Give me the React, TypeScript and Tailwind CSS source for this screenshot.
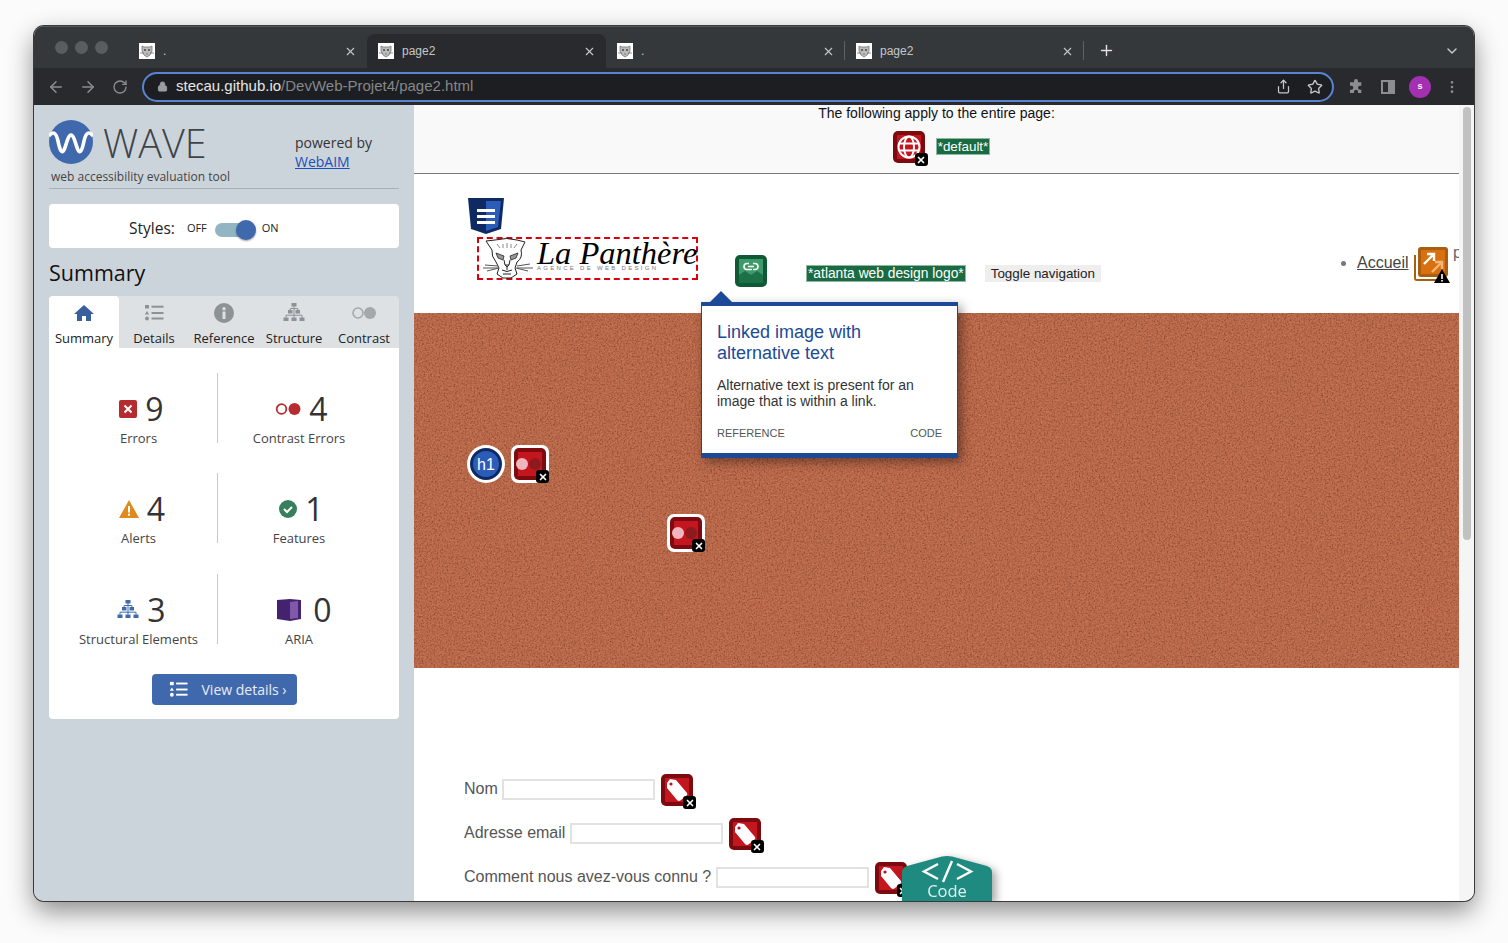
import React from 'react';
import { ArrowLeft, ArrowRight, ChevronDown, EllipsisVertical, Lock, Plus, RotateCw, Share, Star, X } from 'lucide-react';

// favicon of the site, small panther head on white
function Favicon() {
    return (
        <svg width="16" height="16" viewBox="0 0 16 16" className="shrink-0 bg-white">
            <path d="M3 3l2 1h6l2-1v5l-2 4-3 2-3-2-2-4z" fill="#bbb" stroke="#777" strokeWidth="0.8" />
            <circle cx="6" cy="7" r="1" fill="#444" />
            <circle cx="10" cy="7" r="1" fill="#444" />
            <path d="M1 10h4M11 10h4M7 11h2" stroke="#666" strokeWidth="0.7" />
        </svg>
    );
}

function Tab({ title, active, divider }: { title: string; active?: boolean; divider?: boolean }) {
    return (
        <div className={`relative flex h-[34px] w-[239px] shrink-0 items-center rounded-t-lg pl-[11px] pr-[10px] ${active ? 'bg-[#292a2d]' : ''}`}>
            <Favicon />
            <span className="ml-[8px] flex-1 text-[12px] text-[#c4c7c9]">{title}</span>
            <X size={13} strokeWidth={2} className="text-[#c4c7c9]" />
            {divider && <div className="absolute right-0 top-[7px] h-[19px] w-px bg-[#5f6164]" />}
        </div>
    );
}

function TreeIcon({ color, size = 22 }: { color: string; size?: number }) {
    return (
        <svg width={size} height={size} viewBox="0 0 22 22" fill={color}>
            <rect x="8.500" y="1" width="5" height="3.500" />
            <rect x="5" y="8" width="4.500" height="3.500" />
            <rect x="12.500" y="8" width="4.500" height="3.500" />
            <rect x="0.500" y="15.500" width="5" height="3.500" />
            <rect x="8.500" y="15.500" width="5" height="3.500" />
            <rect x="16.500" y="15.500" width="5" height="3.500" />
            <path d="M11 4v11.500M7.200 6.500h7.600v1.500M7.200 6.500V8M3 15.500V13.200h16v2.300" fill="none" stroke={color} strokeWidth="1" />
        </svg>
    );
}

function ListIcon({ color, size = 20 }: { color: string; size?: number }) {
    return (
        <svg width={size} height={size} viewBox="0 0 20 20" fill={color}>
            <rect x="1" y="2" width="4" height="3.500" />
            <path d="M3 8l2.200 3.400H.8z" />
            <circle cx="3" cy="15.500" r="2" />
            <rect x="7.500" y="2.700" width="12" height="2" />
            <rect x="7.500" y="9" width="12" height="2" />
            <rect x="7.500" y="14.500" width="12" height="2" />
        </svg>
    );
}

function SideTab({ label, active, children }: { label: string; active?: boolean; children: React.ReactNode }) {
    return (
        <div className={`flex w-[70px] flex-col items-center pt-[5px] ${active ? 'rounded-t bg-white' : ''}`}>
            <div className="flex h-[24px] items-center justify-center">{children}</div>
            <span className="mt-[4px] whitespace-nowrap text-[13px] leading-[18px] text-[#222]">{label}</span>
        </div>
    );
}

function Stat({ icon, value, label, gap = 8, shift = 6 }: { icon: React.ReactNode; value: string; label: string; gap?: number; shift?: number }) {
    return (
        <div className="flex flex-col items-center pt-[17px]">
            <div className="flex h-[38px] items-center" style={{ gap, marginLeft: shift }}>
                {icon}
                <span className="text-[32px] font-normal leading-[38px] text-[#333]">{value}</span>
            </div>
            <span className="mt-[1px] whitespace-nowrap text-[13px] leading-[18px] text-[#444]">{label}</span>
        </div>
    );
}

function Sidebar() {
    return (
        <aside className="flex w-[380px] shrink-0 flex-col bg-[#ccd4db] px-[15px] pt-[15px] font-['Open_Sans',sans-serif]">
            <div className="flex h-[69px] border-b border-[#a8b0b7]">
                <div className="w-[246px]">
                    <div className="flex items-center">
                        <svg width="44" height="44" viewBox="0 0 44 44">
                            <circle cx="22" cy="22" r="22" fill="#4069ad" />
                            <path d="M0 16c4-5 7-4 9 5 2 10 4 13 6 9s4-15 7-15 5 11 7 15 4 1 6-9c2-9 5-10 9-5" fill="none" stroke="#fff" strokeWidth="3.600" />
                        </svg>
                        <span className="relative top-[1px] ml-[10px] text-[39.500px] font-light leading-[44px] text-[#3f4448]">WAVE</span>
                    </div>
                    <div className="ml-[2px] mt-[4px] whitespace-nowrap text-[12px] leading-[18px] text-[#444]">web accessibility evaluation tool</div>
                </div>
                <div className="pt-[13px] text-[14px] leading-[19px] text-[#333]">
                    <div>powered by</div>
                    <a className="text-[#1c4fb8] underline">WebAIM</a>
                </div>
            </div>

            <div className="mt-[15px] flex h-[44px] items-center rounded bg-white pl-[80px] pt-[5px]">
                <span className="relative top-[-1px] text-[15.500px] leading-[20px] text-[#222]">Styles:</span>
                <span className="ml-[12px] text-[11px] text-[#222]">OFF</span>
                <div className="relative top-[1px] ml-[8px] h-[14px] w-[34px] rounded-full bg-[#92b5c4]">
                    <div className="absolute right-[-7px] top-[-3px] h-[20px] w-[20px] rounded-full bg-[#4069ad] shadow-[0_1px_2px_rgba(0,0,0,0.4)]" />
                </div>
                <span className="ml-[13px] text-[11px] text-[#222]">ON</span>
            </div>

            <h2 className="mt-[10px] text-[21.500px] font-normal leading-[30px] text-[#111]">Summary</h2>

            <div className="mt-[8px] flex h-[52px] rounded-t bg-[#dde1e4]">
                <SideTab label="Summary" active>
                    <svg width="20" height="18" viewBox="0 0 20 18" fill="#3a5f9e"><path d="M10 1L0 10h3v7h5v-5h4v5h5v-7h3z" /></svg>
                </SideTab>
                <SideTab label="Details"><ListIcon color="#8d9296" /></SideTab>
                <SideTab label="Reference">
                    <svg width="20" height="20" viewBox="0 0 20 20">
                        <circle cx="10" cy="10" r="10" fill="#8d9296" />
                        <rect x="8.500" y="8.500" width="3" height="7.500" fill="#dde1e4" />
                        <circle cx="10" cy="5.700" r="1.700" fill="#dde1e4" />
                    </svg>
                </SideTab>
                <SideTab label="Structure"><TreeIcon color="#8d9296" /></SideTab>
                <SideTab label="Contrast">
                    <svg width="26" height="14" viewBox="0 0 26 14">
                        <circle cx="7" cy="7" r="5" fill="none" stroke="#a4a8ab" strokeWidth="1.600" />
                        <circle cx="19" cy="7" r="6" fill="#a4a8ab" />
                    </svg>
                </SideTab>
            </div>

            <div className="h-[371px] rounded-b bg-white pt-[25px]">
                <div className="grid grid-cols-[169px_181px] gap-y-[30px]">
                    <div className="h-[70px] border-r border-[#c8c8c8] pl-[11px]">
                        <Stat label="Errors" value="9" icon={
                            <svg width="18" height="18" viewBox="0 0 18 18"><rect width="18" height="18" rx="2" fill="#b52b30" /><path d="M5.500 5.500l7 7M12.500 5.500l-7 7" stroke="#fff" strokeWidth="2" /></svg>
                        } />
                    </div>
                    <div className="h-[70px] pr-[19px]">
                        <Stat label="Contrast Errors" value="4" shift={5} icon={
                            <svg width="26" height="14" viewBox="0 0 26 14"><circle cx="6.500" cy="7" r="4.800" fill="none" stroke="#b52b30" strokeWidth="1.800" /><circle cx="19.500" cy="7" r="6" fill="#b52b30" /></svg>
                        } />
                    </div>
                    <div className="h-[70px] border-r border-[#c8c8c8] pl-[11px]">
                        <Stat label="Alerts" value="4" shift={7} icon={
                            <svg width="20" height="18" viewBox="0 0 20 18"><path d="M10 0l10 18H0z" fill="#e08a1e" /><rect x="9" y="6" width="2" height="6.500" fill="#fff" /><rect x="9" y="13.700" width="2" height="2" fill="#fff" /></svg>
                        } />
                    </div>
                    <div className="h-[70px] pr-[19px]">
                        <Stat label="Features" value="1" shift={5} icon={
                            <svg width="18" height="18" viewBox="0 0 18 18"><circle cx="9" cy="9" r="9" fill="#37805e" /><path d="M5 9l3 3 5-5" fill="none" stroke="#fff" strokeWidth="2" /></svg>
                        } />
                    </div>
                    <div className="mt-[1px] h-[70px] border-r border-[#c8c8c8] pl-[11px]">
                        <Stat label="Structural Elements" value="3" icon={<TreeIcon color="#4069ad" />} />
                    </div>
                    <div className="mt-[1px] h-[70px] pr-[19px]">
                        <Stat label="ARIA" value="0" gap={12} shift={11} icon={
                            <svg width="24" height="24" viewBox="0 0 24 24"><path d="M0 2l13-1 11 1v19l-11 2-13-2z" fill="#45226f" /><path d="M13 4l8-1v17l-8 1z" fill="#7d5aa8" /></svg>
                        } />
                    </div>
                </div>
                <button className="mx-auto mt-[30px] flex h-[31px] w-[145px] items-center rounded bg-[#4069ad] pl-[17px] text-[14px] text-[#e8edf5]">
                    <ListIcon color="#fff" size={19} />
                    <span className="ml-[14px] whitespace-nowrap">View details ›</span>
                </button>
            </div>
        </aside>
    );
}

function XBadge() {
    return (
        <span className="absolute bottom-[-3px] right-[-3px] flex h-[13px] w-[13px] items-center justify-center rounded-[3px] bg-black">
            <X size={10} strokeWidth={4} className="text-white" />
        </span>
    );
}

// red wave icon square, shape goes inside
function RedIcon({ children }: { children: React.ReactNode }) {
    return (
        <span className="relative flex h-[32px] w-[32px] shrink-0 items-center justify-center rounded-[5px] bg-[#7d0a0f]">
            <span className="flex h-[24px] w-[24px] items-center justify-center bg-[#c4161e]">{children}</span>
            <XBadge />
        </span>
    );
}

function TagIcon() {
    return (
        <RedIcon>
            <svg width="32" height="32" viewBox="0 0 32 32" className="shrink-0">
                <path d="M6 9L9 5l6 1 11 13q1 2-1 3l-5 4q-2 2-4 0L6 14z" fill="#fff" />
                <circle cx="10" cy="10" r="1.600" fill="#b3141b" />
            </svg>
        </RedIcon>
    );
}

function ContrastIcon({ className }: { className: string }) {
    return (
        <span className={`absolute flex h-[38px] w-[38px] items-center justify-center rounded-[7px] bg-white ${className}`}>
            <span className="relative flex h-[32px] w-[32px] items-center justify-center rounded-[5px] bg-[#7d0a0f]">
                <span className="flex h-[24px] w-[24px] items-center bg-[#c4161e]">
                    <svg width="32" height="14" viewBox="0 0 32 14" className="ml-[-3px] shrink-0">
                        <circle cx="7" cy="7" r="6" fill="#f1b6bd" />
                        <circle cx="20" cy="7" r="6" fill="#8f1a1e" />
                    </svg>
                </span>
                <XBadge />
            </span>
        </span>
    );
}

function FormRow({ label }: { label: string }) {
    return (
        <div className="flex h-[32px] items-center">
            <span className="whitespace-nowrap text-[16px] text-[#555]">{label}</span>
            <input className="ml-[4.500px] h-[21px] w-[153px] border-2 border-[#e2e2e2] bg-white" />
            <span className="relative top-[1px] ml-[6px]"><TagIcon /></span>
        </div>
    );
}

function PageContent() {
    return (
        <div className="relative flex-1 overflow-hidden bg-white font-['Liberation_Sans',sans-serif]">
            <div className="flex h-[69px] flex-col items-center border-b border-[#777] bg-[#f9f9f9]">
                <div className="text-[14px] leading-[17px] text-[#111]">The following apply to the entire page:</div>
                <div className="ml-[10px] mt-[9px] flex items-center gap-[11px]">
                    <RedIcon>
                        <svg width="26" height="26" viewBox="0 0 26 26" fill="none" stroke="#fff" strokeWidth="2" className="shrink-0">
                            <circle cx="13" cy="13" r="10.500" />
                            <ellipse cx="13" cy="13" rx="5" ry="10.500" />
                            <path d="M3 9.500h20M3 16.500h20" />
                        </svg>
                    </RedIcon>
                    <span className="relative top-[-1px] border border-[#8fb8a2] bg-[#1a6b42] px-px text-[13.400px] leading-[15px] text-white">*default*</span>
                </div>
            </div>

            <div className="flex h-[139px] items-start">
                <div className="ml-[63px] mt-[63px] flex h-[43px] w-[221px] items-center border-2 border-dashed border-[#d9000d] bg-white pl-[4px]">
                    <svg width="50" height="41" viewBox="0 0 50 41" fill="none" stroke="#222" strokeWidth="1" className="shrink-0">
                        <path d="M3 3l9-1q12-3 22 0l8 2-4 8q2 8-4 12l-2 6 2 6-6 4h-8l-6-4 2-6-3-6q-5-6-4-12z" />
                        <path d="M14 6l3 4M34 6l-3 4M20 6v4M28 6v4M24 5v5" strokeWidth="0.700" stroke="#555" />
                        <path d="M13 15l8 3-1 4-5-2zM35 15l-8 3 1 4 5-2z" fill="#999" strokeWidth="0.800" />
                        <path d="M21 22l1 5h4l1-5M22 27l2 2 2-2M24 29v3M19 32q5 3 10 0M20 36h8" />
                        <path d="M2 27l13 1M0 30l15 0M4 33l12-3M47 26l-13 2M50 30H34M45 33l-12-3" stroke="#555" />
                    </svg>
                    <div className="relative ml-[4px] h-[39px] w-[162px]">
                        <span className="absolute left-0 top-[3px] whitespace-nowrap font-['Liberation_Serif',serif] text-[32.500px] italic leading-[22px] text-black">La Panthère</span>
                        <span className="absolute left-0 top-[25px] whitespace-nowrap text-[6px] leading-[8px] tracking-[2.300px] text-[#777]">AGENCE DE WEB DESIGN</span>
                    </div>
                </div>
                <span className="ml-[108px] mt-[91px] whitespace-nowrap border border-[#8fb8a2] bg-[#1a6b42] px-px text-[13.800px] leading-[15px] text-white">*atlanta web design logo*</span>
                <span className="ml-[19px] mt-[91px] whitespace-nowrap bg-[#eeeeee] px-[6px] text-[13.400px] leading-[17px] text-[#222]">Toggle navigation</span>
                <div className="ml-[240px] mt-[79px] flex items-center text-[16px] leading-[20px] text-[#444]">
                    <span className="mr-[11px] h-[5px] w-[5px] rounded-full bg-[#777]" />
                    <a className="underline">Accueil</a>
                </div>
            </div>

            <div className="relative h-[355px] overflow-hidden bg-[#b9694a]">
                {/* paper texture of the hero image */}
                <svg className="absolute inset-0 h-full w-full">
                    <filter id="paperDark" colorInterpolationFilters="sRGB" x="0" y="0" width="100%" height="100%">
                        <feTurbulence type="fractalNoise" baseFrequency="0.6" numOctaves="2" seed="4" />
                        <feColorMatrix type="matrix" values="0 0 0 0 0.45  0 0 0 0 0.2  0 0 0 0 0.12  1.6 0 0 0 -0.72" />
                    </filter>
                    <filter id="paperLight" colorInterpolationFilters="sRGB" x="0" y="0" width="100%" height="100%">
                        <feTurbulence type="fractalNoise" baseFrequency="0.55" numOctaves="2" seed="11" />
                        <feColorMatrix type="matrix" values="0 0 0 0 0.85  0 0 0 0 0.52  0 0 0 0 0.38  1.4 0 0 0 -0.6" />
                    </filter>
                    <rect width="100%" height="100%" filter="url(#paperDark)" />
                    <rect width="100%" height="100%" filter="url(#paperLight)" />
                </svg>
            </div>

            <form className="flex flex-col gap-[12px] pl-[50px] pt-[105px]">
                <FormRow label="Nom" />
                <FormRow label="Adresse email" />
                <FormRow label="Comment nous avez-vous connu ?" />
            </form>

            {/* WAVE icons laid over the page */}
            <svg width="36" height="36" viewBox="0 0 36 36" className="absolute left-[54px] top-[93px]">
                <path d="M0 0h36l-3 31-15 5-15-5z" fill="#0f2a63" />
                <path d="M18 3h15l-3 26-12 4z" fill="#2a5cb8" />
                <rect x="9" y="11" width="18" height="3" fill="#fff" />
                <rect x="9" y="17" width="18" height="3" fill="#fff" />
                <rect x="9" y="23" width="18" height="3" fill="#fff" />
            </svg>

            <span className="absolute left-[321px] top-[150px] flex h-[32px] w-[32px] items-center justify-center rounded-[5px] bg-[#0f5a35]">
                <svg width="24" height="24" viewBox="0 0 24 24">
                    <rect width="24" height="24" fill="#3d9a6b" />
                    <path d="M0 24v-8l6-4 6 4 6-4 6 4v8z" fill="#1d7148" />
                    <path d="M10 4.500H8a3 3 0 000 6h5M14 4.500h2a3 3 0 010 6h-2M9 7.500h6" fill="none" stroke="#fff" strokeWidth="1.600" />
                </svg>
            </span>

            <span className="absolute left-[1000px] top-[142px] h-[34px] w-[34px]">
                <span className="absolute bottom-0 left-0 h-[26px] w-[26px] rounded-bl-[3px] border-b-2 border-l-2 border-[#a85d10]" />
                <span className="absolute right-0 top-0 flex h-[30px] w-[30px] items-center justify-center rounded-[3px] bg-[#a85d10]">
                    <svg width="24" height="24" viewBox="0 0 24 24" fill="none" strokeWidth="2.400">
                        <rect width="24" height="24" fill="#d9700f" />
                        <path d="M3 14L13 4M6 4h7v7" stroke="#fff" />
                        <path d="M11 22l10-10M14 12h7v7" stroke="#f3b67a" />
                    </svg>
                </span>
                <svg width="16" height="14" viewBox="0 0 16 14" className="absolute bottom-[-2px] right-[-2px]">
                    <path d="M8 0l8 14H0z" fill="#000" />
                    <rect x="7.200" y="5" width="1.600" height="5" fill="#fff" />
                    <rect x="7.200" y="11" width="1.600" height="1.600" fill="#fff" />
                </svg>
            </span>
            <span className="absolute left-[1039px] top-[138px] text-[16px] leading-[20px] text-[#666]">p</span>

            <span className="absolute left-[53px] top-[340px] flex h-[38px] w-[38px] items-center justify-center rounded-full bg-white">
                <span className="flex h-[32px] w-[32px] items-center justify-center rounded-full border-[3px] border-[#0f2a63] bg-[#2a5cb8] pt-px text-[16px] text-white">h1</span>
            </span>
            <ContrastIcon className="left-[97px] top-[340px]" />
            <ContrastIcon className="left-[253px] top-[409px]" />

            {/* popup of the selected icon */}
            <div className="absolute left-[287px] top-[197px] h-[156px] w-[257px] border-x border-b-[5px] border-t-[4px] border-[#1c4a97] bg-white px-[15px] pt-[16px] shadow-[4px_4px_10px_rgba(0,0,0,0.4)]">
                <span className="absolute left-[8px] top-[-15px] h-0 w-0 border-x-[11px] border-b-[11px] border-x-transparent border-b-[#1c4a97]" />
                <h3 className="text-[18px] font-normal leading-[21px] text-[#1c4a97]">Linked image with alternative text</h3>
                <p className="mt-[13px] text-[14px] leading-[16px] text-[#333]">Alternative text is present for an image that is within a link.</p>
                <div className="mt-[16px] flex justify-between text-[11px] leading-[16px] text-[#555]">
                    <span>REFERENCE</span>
                    <span>CODE</span>
                </div>
            </div>

            {/* code drawer tab */}
            <div className="absolute bottom-0 left-[488px] h-[45px] w-[90px] drop-shadow-[4px_3px_4px_rgba(0,0,0,0.35)]">
                <svg width="90" height="45" viewBox="0 0 90 45" className="absolute inset-0">
                    <path d="M0 45V16Q0 12 5 10L40 .5Q45 -.5 50 .5L85 10Q90 12 90 16V45z" fill="#1f8a7f" />
                    <path d="M36 8L22 15.500l14 7.500M55 8l14 7.500-14 7.500M50 5l-9 21" fill="none" stroke="#fff" strokeWidth="2.400" />
                </svg>
                <span className="absolute bottom-0 left-0 w-full text-center font-['Open_Sans',sans-serif] text-[16.500px] leading-[20px] text-[#dff2ef]">Code</span>
            </div>
        </div>
    );
}

export default function App() {
    return (
        <div className="h-[943px] w-[1508px] overflow-hidden bg-[#fbfbfb] pl-[34px] pt-[26px] font-['Liberation_Sans',sans-serif]">
            <div className="flex h-[875px] w-[1440px] flex-col overflow-hidden rounded-[10px] shadow-[0_0_0_1px_#3a3a3a,0_10px_26px_rgba(0,0,0,0.45)]">
                {/* tab strip */}
                <div className="flex h-[42px] shrink-0 items-end border-t border-[#55585b] bg-[#35383b]">
                    <div className="mb-[14px] ml-[21px] flex w-[73px] shrink-0 gap-[7px]">
                        <span className="h-[13px] w-[13px] rounded-full bg-[#5a5d60]" />
                        <span className="h-[13px] w-[13px] rounded-full bg-[#5a5d60]" />
                        <span className="h-[13px] w-[13px] rounded-full bg-[#5a5d60]" />
                    </div>
                    <Tab title="." />
                    <Tab title="page2" active />
                    <Tab title="." divider />
                    <Tab title="page2" divider />
                    <Plus size={17} strokeWidth={2} className="mb-[9px] ml-[14px] text-[#dfe1e3]" />
                    <ChevronDown size={16} strokeWidth={2.200} className="mb-[9px] ml-[329px] text-[#c4c7c9]" />
                </div>

                {/* address bar */}
                <div className="flex h-[37px] shrink-0 items-center bg-[#292a2d] text-[#8b8e91]">
                    <ArrowLeft size={18} className="ml-[13px]" />
                    <ArrowRight size={18} className="ml-[14px]" />
                    <RotateCw size={16} className="ml-[15px]" />
                    <div className="ml-[14px] flex h-[30px] w-[1192px] items-center rounded-full border-2 border-[#5a84d2] bg-[#1d1e21] pl-[13px] pr-[9px]">
                        <Lock size={11} fill="#9a9da0" className="text-[#9a9da0]" />
                        <span className="ml-[8px] flex-1 text-[15px] text-[#e6e7e8]">stecau.github.io<span className="text-[#85888b]">/DevWeb-Projet4/page2.html</span></span>
                        <Share size={15} className="text-[#c4c7c9]" />
                        <Star size={16} className="ml-[16px] text-[#c4c7c9]" />
                    </div>
                    <svg width="16" height="16" viewBox="0 0 24 24" fill="#8b8e91" className="ml-[14px]">
                        <path d="M9 3a3 3 0 016 0v2h5v5h-2a3 3 0 000 6h2v5h-5v-2a3 3 0 00-6 0v2H3v-5h2a3 3 0 000-6H3V5h6z" />
                    </svg>
                    <span className="ml-[17px] flex h-[14px] w-[14px] justify-end border-2 border-[#8b8e91]">
                        <span className="h-full w-[5px] bg-[#8b8e91]" />
                    </span>
                    <span className="ml-[14px] flex h-[22px] w-[22px] items-center justify-center rounded-full bg-[#a32fb3] text-[9px] font-bold text-white">s</span>
                    <EllipsisVertical size={16} className="ml-[13px]" />
                </div>

                <div className="flex min-h-0 flex-1">
                    <Sidebar />
                    <PageContent />
                    {/* page scrollbar */}
                    <div className="w-[15px] shrink-0 bg-[#f5f5f5] pl-[4px] pt-[2px]">
                        <div className="h-[433px] w-[8px] rounded-full bg-[#c1c1c1]" />
                    </div>
                </div>
            </div>
        </div>
    );
}
